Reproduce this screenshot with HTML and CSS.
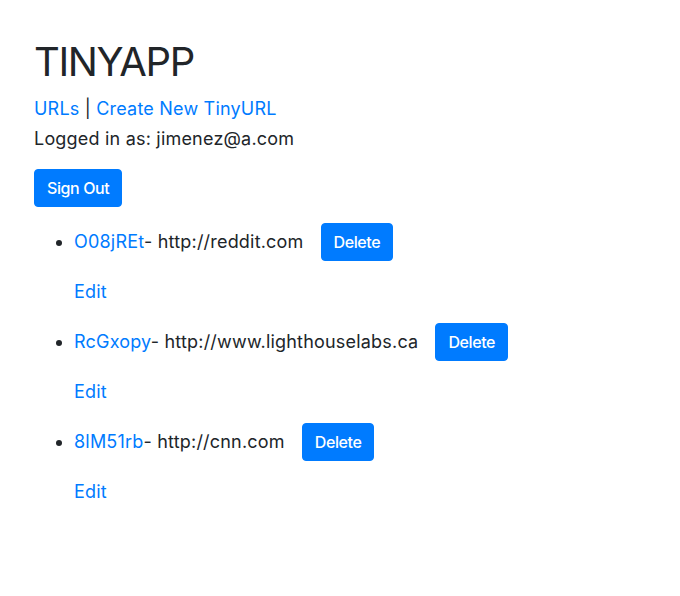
FILE: index.html
```html
<!DOCTYPE html>
<html lang="en">
<head>
<meta charset="utf-8">
<title>TinyApp</title>
<link rel="stylesheet" href="styles.css">
</head>
<body>
<div class="page">
  <h1 class="title">TINYAPP</h1>
  <div class="header-info">
    <nav class="nav"><a href="#" class="link">URLs</a> | <a href="#" class="link">Create New TinyURL</a></nav>
    <p class="login">Logged in as: jimenez@a.com</p>
  </div>
  <button class="btn">Sign Out</button>
  <ul class="urls">
    <li class="url-item">
      <div class="url-row"><a href="#" class="link">O08jREt</a>- http://reddit.com<button class="btn btn-delete">Delete</button></div>
      <a href="#" class="link edit">Edit</a>
    </li>
    <li class="url-item">
      <div class="url-row"><a href="#" class="link">RcGxopy</a>- http://www.lighthouselabs.ca<button class="btn btn-delete">Delete</button></div>
      <a href="#" class="link edit">Edit</a>
    </li>
    <li class="url-item">
      <div class="url-row"><a href="#" class="link">8lM51rb</a>- http://cnn.com<button class="btn btn-delete">Delete</button></div>
      <a href="#" class="link edit">Edit</a>
    </li>
  </ul>
</div>
</body>
</html>
```
FILE: styles.css
```css
html, body {
  margin: 0;
  padding: 0;
  background: #ffffff;
}

body {
  font-family: Inter, "Liberation Sans", sans-serif;
  font-size: 18px;
  line-height: 27px;
  letter-spacing: 0.2px;
  color: #212529;
}

.page {
  padding: 38px 34px 0 34px;
}

.title {
  margin: 0 0 8px 0;
  font-size: 40px;
  line-height: 48px;
  font-weight: 400;
  letter-spacing: -1.4px;
  color: #212529;
}

.header-info {
  line-height: 30px;
}

.nav {
  margin: 0;
}

.login {
  margin: 0;
}

.link {
  color: #007bff;
  text-decoration: none;
}

.btn {
  display: inline-block;
  margin: 15px 0 0 0;
  padding: 6px 12px;
  font-family: inherit;
  font-size: 16px;
  font-weight: 500;
  line-height: 24px;
  letter-spacing: -0.4px;
  color: #ffffff;
  background: #007bff;
  border: 1px solid #007bff;
  border-radius: 4px;
  cursor: pointer;
}

.btn-delete {
  margin: 0 0 0 17px;
}

.urls {
  margin: 16px 0 0 0;
  padding-left: 40px;
}

.url-item {
  margin-bottom: 18px;
}

.url-row {
  line-height: 27px;
}

.edit {
  display: block;
  margin-top: 17px;
}
```
